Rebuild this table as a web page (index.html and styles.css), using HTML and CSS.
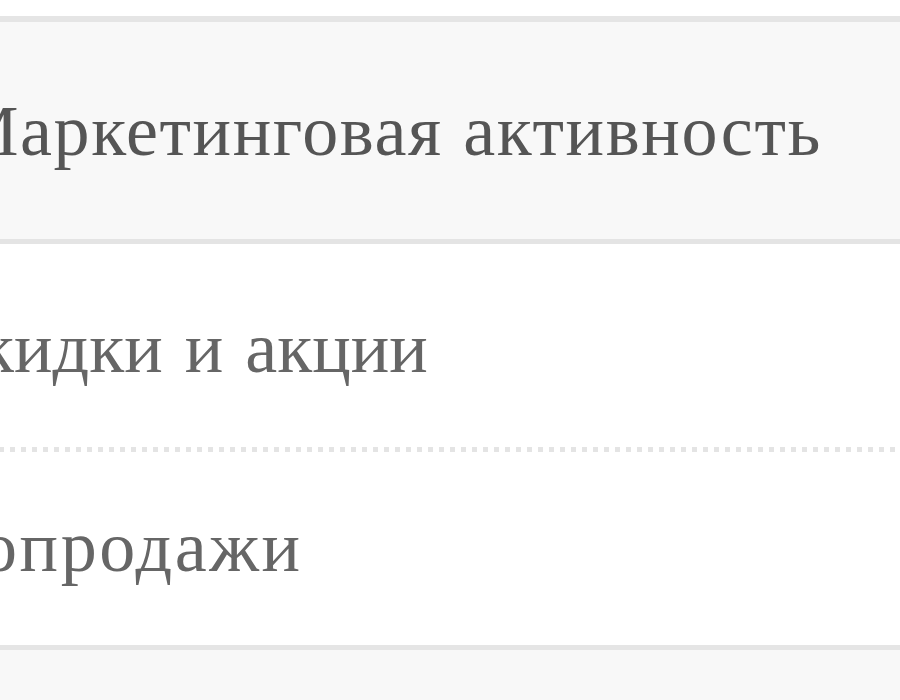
FILE: index.html
```html
<!DOCTYPE html>
<html lang="ru">
<head>
<meta charset="utf-8">
<link rel="stylesheet" href="styles.css">
</head>
<body>
<nav class="menu">
  <div class="head"><span class="label label-head">Маркетинговая активность</span></div>
  <a class="item item-first"><span class="label label-sale">Скидки и акции</span></a>
  <div class="sep"></div>
  <a class="item item-last"><span class="label label-upsell">Допродажи</span></a>
  <div class="head head-next"></div>
</nav>
</body>
</html>
```
FILE: styles.css
```css
html, body {
  margin: 0;
  padding: 0;
  background: #ffffff;
}
body {
  font-family: "Liberation Serif", "Times New Roman", serif;
  overflow: hidden;
}
.menu {
  margin-top: 16px;
  display: flex;
  flex-direction: column;
}
.head {
  background: #f8f8f8;
  border-top: 6px solid #e5e5e5;
  border-bottom: 5px solid #e4e4e4;
  display: flex;
  align-items: center;
  font-size: 72px;
  color: #555555;
  line-height: 1;
  box-sizing: border-box;
  height: 228px;
  white-space: nowrap;
  overflow: hidden;
}
.item {
  display: flex;
  align-items: center;
  font-size: 72px;
  color: #666666;
  line-height: 1;
  box-sizing: border-box;
  white-space: nowrap;
  overflow: hidden;
  text-decoration: none;
}
.item-first {
  height: 203px;
  padding-top: 4px;
}
.item-last {
  height: 193px;
  padding-bottom: 4px;
}
.label-head {
  margin-left: -45.6px;
  letter-spacing: 1.6px;
  word-spacing: 1px;
}
.label-sale {
  margin-left: -69px;
  word-spacing: 4px;
}
.label-upsell {
  margin-left: -70.5px;
  letter-spacing: 2.5px;
}
.sep {
  height: 5px;
  background-image: linear-gradient(to right, #e4e4e4 5px, transparent 5px);
  background-size: 11px 5px;
  background-position: -1px 0;
  background-repeat: repeat-x;
}
.head-next {
  border-bottom: none;
  border-top-width: 5px;
  height: 60px;
}
```
